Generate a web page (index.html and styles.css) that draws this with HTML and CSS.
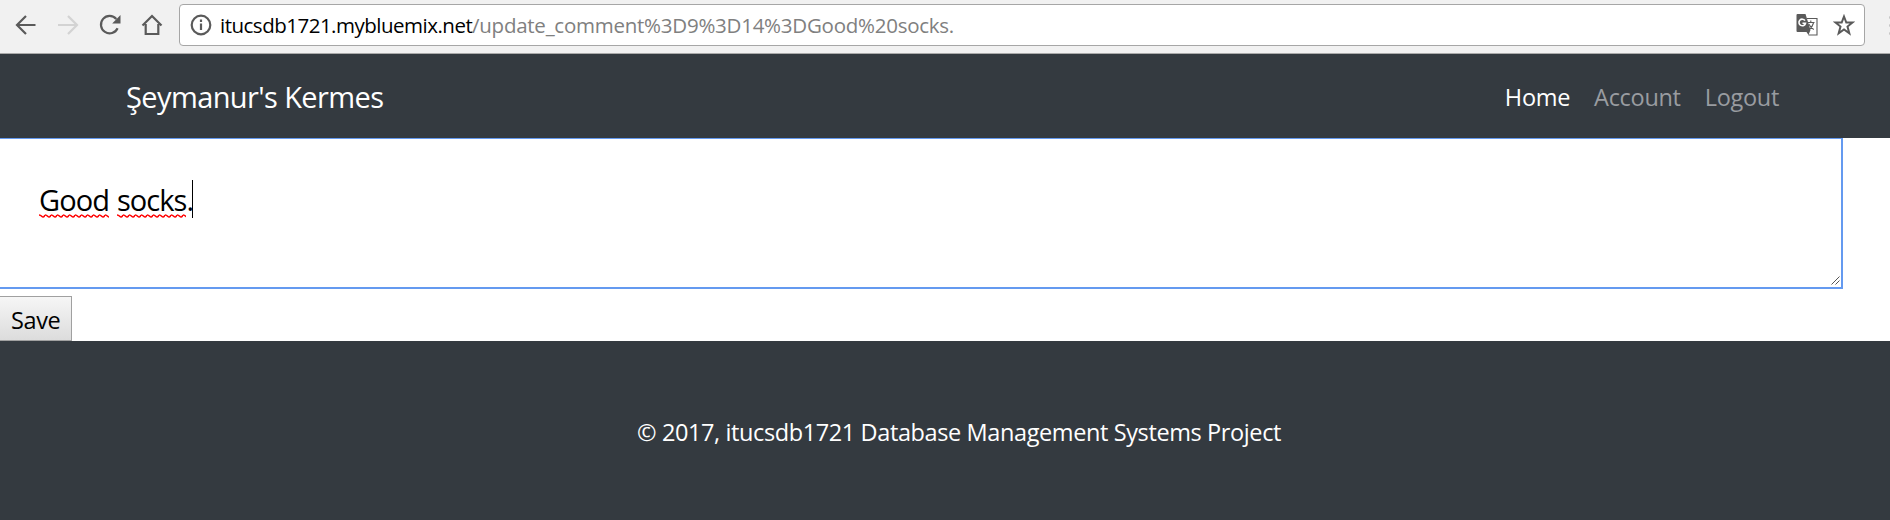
FILE: index.html
```html
<!DOCTYPE html>
<html lang="en">
<head>
<meta charset="utf-8">
<title>Şeymanur's Kermes</title>
<link rel="stylesheet" href="styles.css">
</head>
<body>
<div class="toolbar">
  <div class="tools">
    <svg class="icon" viewBox="0 0 22 22"><path d="M20.5 11H2.5M11 2L2 11l9 9"/></svg>
    <svg class="icon disabled" viewBox="0 0 22 22"><path d="M1 11h18.5M11 2l9 9-9 9"/></svg>
    <svg class="icon" viewBox="0 0 22 22"><path d="M18.6 14.2A8.7 8.7 0 1 1 17.3 5"/><path class="solid" d="M21.5 1v8.5h-8.3z"/></svg>
    <svg class="icon" viewBox="0 0 22 22"><path d="M1.5 11.5L11 2l9.500 9.500M4.700 10v10h12.600V10"/></svg>
  </div>
  <div class="omnibox">
    <svg class="icon" viewBox="0 0 22 22"><circle cx="11" cy="11" r="9.300"/><path d="M11 9.500v6.500M11 5.500v2.500"/></svg>
    <div class="url"><span class="host">itucsdb1721.mybluemix.net</span><span class="path">/update_comment%3D9%3D14%3DGood%20socks.</span></div>
    <svg class="icon translate" viewBox="0 0 22 22"><path class="thin" d="M11 4.500h10v16.500h-8.500"/><path class="solid" d="M1.500 0H9.500l5 16-2 5-2-3H1.500Q.5 18 .5 17V1Q.5 0 1.500 0z"/><path class="letter" d="M9 6.600A3.300 3.300 0 1 0 9.500 9.200H6.500"/><path class="thin" d="M11.500 8.500h7M14.800 6.500v2M17.500 9q-1 4-4.500 6.500M12.800 10q2 4 5 5.500"/></svg>
    <svg class="icon" viewBox="0 0 22 22"><path class="star" d="M11 2.500l2.300 6h6.200l-5 4.100 1.800 6.700-5.300-3.900-5.300 3.900 1.800-6.700-5-4.100h6.200z"/></svg>
  </div>
  <div class="menu"><i></i><i></i><i></i></div>
</div>
<nav class="navbar">
  <a class="brand">Şeymanur's Kermes</a>
  <div class="links"><a class="home">Home</a><a class="account">Account</a><a class="logout">Logout</a></div>
</nav>
<main>
  <div class="comment">
    <div class="text"><span class="misspelt">Good</span> <span class="misspelt">socks</span>.<i class="caret"></i></div>
    <svg class="grip" viewBox="0 0 9 9"><path d="M.5 8.500l8-8M4.500 8.500l4-4"/></svg>
  </div>
  <button class="save">Save</button>
</main>
<footer class="footer"><p>© 2017, itucsdb1721 Database Management Systems Project</p></footer>
</body>
</html>
```
FILE: styles.css
```css
* { box-sizing: border-box; }
body { margin: 0; height: 520px; overflow: hidden; display: flex; flex-direction: column; background: #fff; font-family: "Open Sans", "Noto Sans", sans-serif; }
.toolbar { height: 54px; flex: none; display: flex; background: #f1f1f1; border-bottom: 1px solid #aaa; padding-top: 4px; }
.tools { width: 179px; padding: 10px 0 0 15px; display: flex; gap: 20px; flex: none; }
.icon { width: 22px; height: 22px; flex: none; fill: none; stroke: #5a5a5a; stroke-width: 2.2; }
.disabled { stroke: #d3d3d3; }
.icon .solid { fill: #5a5a5a; stroke: none; }
.icon .thin { stroke-width: 1.1; }
.icon .letter { stroke: #fff; stroke-width: 1.6; }
.icon .star { stroke-width: 2; }
.omnibox { width: 1686px; flex: none; height: 42px; display: flex; align-items: center; padding: 0 9px 0 10px; background: #fff; border: 1px solid #a6a6a6; border-radius: 4px; }
.url { flex: 1; display: flex; margin-left: 8px; font-size: 20.5px; line-height: 28px; white-space: nowrap; color: #808080; }
.host { color: #000; width: 252px; letter-spacing: -0.5px; }
.path { letter-spacing: -0.25px; }
.translate { margin-right: 15px; }
.menu { margin: 12px 0 0 24px; display: flex; flex-direction: column; gap: 5px; flex: none; }
.menu i { width: 3px; height: 3px; border-radius: 50%; background: #c4c4c4; }
.navbar { height: 84px; flex: none; display: flex; justify-content: space-between; align-items: center; background: #343a40; padding: 0 111px 0 126px; color: #fff; }
.brand { font-size: 29px; letter-spacing: -0.6px; line-height: 40px; padding-top: 2px; }
.links { display: flex; gap: 24px; font-size: 23.5px; line-height: 32px; padding-top: 2px; color: #999ca0; letter-spacing: -0.3px; }
.home { color: #fff; }
main { height: 203px; flex: none; }
.comment { width: 1843px; height: 151px; position: relative; border: 2px solid #649af0; border-top-width: 1px; border-left: 0; padding: 41px 0 0 39px; }
.text { display: flex; font-size: 29px; line-height: 40px; white-space: pre; color: #000; letter-spacing: -0.95px; align-items: flex-start; }
.misspelt { height: 38px; background: url("data:image/svg+xml,%3Csvg xmlns='http://www.w3.org/2000/svg' width='6' height='4'%3E%3Cpath d='M0 1Q1.500 1 3 2.500T6 1' fill='none' stroke='red' stroke-width='1.600'/%3E%3C/svg%3E") left bottom repeat-x; }
.misspelt + .misspelt { margin-left: 8px; }
.caret { width: 1px; height: 38px; margin-left: -1px; background: #000; }
.grip { position: absolute; right: 1px; bottom: 2px; width: 9px; height: 9px; fill: none; stroke: #555; stroke-width: 1; }
.save { display: block; width: 72px; height: 45px; margin-top: 7px; padding: 3px 0 0 11px; text-align: left; background: linear-gradient(#f6f6f6, #dcdcdc); border: 1px solid #a0a0a0; border-left: 0; font: 23.5px/32px "Open Sans", sans-serif; letter-spacing: -0.4px; color: #000; }
.footer { flex: 1; background: #343a40; color: #fff; padding: 75px 0 0 637px; }
.footer p { margin: 0; font-size: 23.5px; line-height: 32px; letter-spacing: -0.39px; white-space: nowrap; }
```
